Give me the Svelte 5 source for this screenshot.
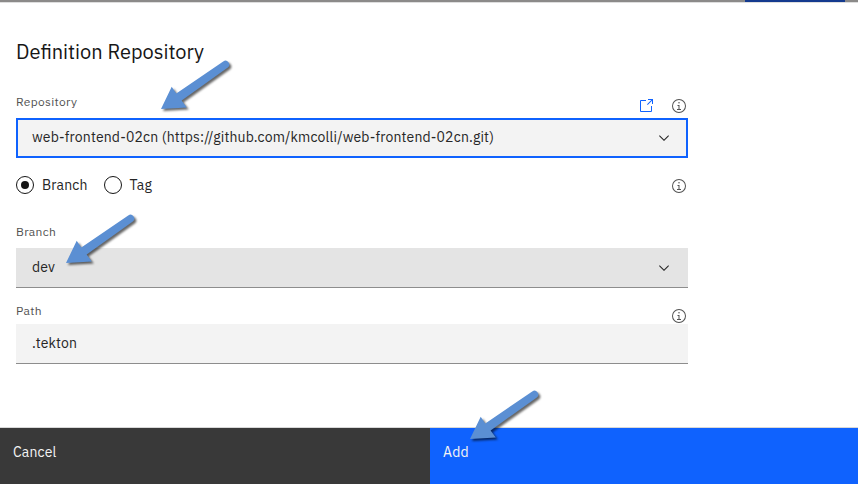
<script>
  let ref = $state('branch');
  let path = $state('.tekton');
  const arrows = [
    { x: 161, y: 109 },
    { x: 66, y: 263 },
    { x: 470, y: 439 }
  ];
</script>

{#snippet info()}
  <svg class="icon info" viewBox="0 0 32 32" aria-hidden="true">
    <path d="M17 22V14H13v2h2v6H12v2h8V22ZM16 8a1.5 1.5 0 1 0 1.5 1.5A1.5 1.5 0 0 0 16 8Z" />
    <path d="M16 30A14 14 0 1 1 30 16 14 14 0 0 1 16 30ZM16 4A12 12 0 1 0 28 16 12 12 0 0 0 16 4Z" />
  </svg>
{/snippet}

{#snippet chevron()}
  <svg class="icon" viewBox="0 0 32 32" aria-hidden="true">
    <path d="M16 22 6 12l1.4-1.4L16 19.2l8.6-8.6L26 12Z" />
  </svg>
{/snippet}

<div class="panel">
  <div class="strip"><span></span></div>
  <main>
    <h1>Definition Repository</h1>
    <div class="label-row repo-row">
      <span class="label repo-label">Repository</span>
      <span class="tools">
        <svg class="icon launch" viewBox="0 0 32 32" aria-hidden="true">
          <path d="M26 28H6a2 2 0 0 1-2-2V6A2 2 0 0 1 6 4H16V6H6V26H26V16h2V26A2 2 0 0 1 26 28Z" />
          <path d="M20 2V4h6.6L18 12.6 19.4 14 28 5.4V12h2V2Z" />
        </svg>
        {@render info()}
      </span>
    </div>
    <div class="field focused">
      <span class="value">web-frontend-02cn (https://github.com/kmcolli/web-frontend-02cn.git)</span>
      {@render chevron()}
    </div>
    <div class="radios">
      <button class="radio" onclick={() => (ref = 'branch')}>
        <span class="dot" class:on={ref === 'branch'}></span><span>Branch</span>
      </button>
      <button class="radio" onclick={() => (ref = 'tag')}>
        <span class="dot" class:on={ref === 'tag'}></span><span>Tag</span>
      </button>
      <span class="tools">{@render info()}</span>
    </div>
    <div class="label-row branch-row"><span class="label">Branch</span></div>
    <div class="field branch-field">
      <span class="value">dev</span>
      {@render chevron()}
    </div>
    <div class="label-row path-row">
      <span class="label path-label">Path</span>
      <span class="tools">{@render info()}</span>
    </div>
    <input class="field path-field" bind:value={path} aria-label="Path" />
  </main>
  <footer>
    <button class="cancel"><span>Cancel</span></button>
    <button class="add"><span>Add</span></button>
  </footer>

  <svg class="arrows" width="858" height="484" aria-hidden="true">
    {#each arrows as a}
      <path
        transform="translate({a.x} {a.y})"
        d="M0 0 10.7-22.3 15.3-15.6 62.2-47.4A3.7 3.7 0 0 1 66.8-41.6L20.6-8.6 25.8-1.6Z"
      />
    {/each}
  </svg>
</div>

<style>
  .panel {
    position: relative;
    display: flex;
    flex-direction: column;
    width: 858px;
    height: 484px;
    overflow: hidden;
    background: #fff;
    color: #262626;
    font-family: "IBM Plex Sans", "Noto Sans", sans-serif;
    font-size: 14px;
    letter-spacing: 0.16px;
  }
  .panel * { box-sizing: border-box; }
  .strip {
    flex: none;
    height: 3px;
    background: linear-gradient(#8b8a89 2px, #dedede 2px);
  }
  .strip span {
    display: block;
    width: 100px;
    height: 2px;
    margin-left: 745px;
    background: #143a8e;
  }
  main {
    display: flex;
    flex-direction: column;
    width: 688px;
    height: 424px;
    padding-left: 16px;
  }
  h1 {
    height: 28px;
    margin: 35px 0 32px;
    font-size: 20px;
    line-height: 28px;
    font-weight: 400;
    letter-spacing: 0;
    color: #161616;
    white-space: nowrap;
  }
  .label-row { display: flex; justify-content: space-between; }
  .label { font-size: 12px; line-height: 16px; letter-spacing: 0.32px; color: #525252; }
  .repo-row { height: 20px; }
  .repo-label { margin-top: -4px; }
  .icon { display: block; flex: none; width: 16px; height: 16px; fill: #262626; }
  .info { fill: #525252; }
  .launch { fill: #0f62fe; }
  .tools { display: flex; gap: 17px; margin-right: 1px; }
  .field {
    display: flex;
    flex: none;
    align-items: center;
    justify-content: space-between;
    width: 672px;
    height: 40px;
    padding: 0 16px;
    border: 0;
    border-bottom: 1px solid #8d8d8d;
    border-radius: 0;
    outline: none;
    background: #f3f3f3;
    color: #262626;
    font: inherit;
    letter-spacing: inherit;
  }
  .focused { padding: 0 14px; border: 2px solid #0f62fe; }
  .value { line-height: 18px; padding-bottom: 2px; white-space: nowrap; }
  .path-field { padding-bottom: 2px; }
  .radios { display: flex; align-items: center; height: 18px; margin-top: 18px; }
  .radio {
    display: flex;
    align-items: center;
    padding: 0;
    border: 0;
    background: none;
    color: inherit;
    font: inherit;
    letter-spacing: inherit;
    line-height: 18px;
  }
  .radio + .radio { margin-left: 16px; }
  .radios .tools { margin-left: auto; padding-top: 2px; }
  .dot {
    display: grid;
    place-items: center;
    width: 18px;
    height: 18px;
    margin-right: 8px;
    border: 1.2px solid #161616;
    border-radius: 50%;
  }
  .on::after { content: ""; width: 8px; height: 8px; border-radius: 50%; background: #161616; }
  .branch-row { height: 24px; margin-top: 30px; }
  .branch-field { background: #e4e4e4; }
  .path-row { height: 16px; margin-top: 20px; }
  .path-label { margin-top: -5px; }
  footer { display: flex; flex: none; height: 57px; border-top: 1px solid #d8d8d8; }
  footer button {
    display: flex;
    align-items: flex-start;
    padding: 15px 13px;
    border: 0;
    color: #f4f4f4;
    font: inherit;
    letter-spacing: inherit;
    line-height: 18px;
  }
  .cancel { width: 430px; background: #393939; }
  .add { width: 428px; background: #0f62fe; }
  .arrows { position: absolute; inset: 0; pointer-events: none; }
  .arrows path {
    fill: #5b8fd3;
    filter: drop-shadow(2px 2px 1px rgba(0, 0, 0, 0.6));
  }
</style>
